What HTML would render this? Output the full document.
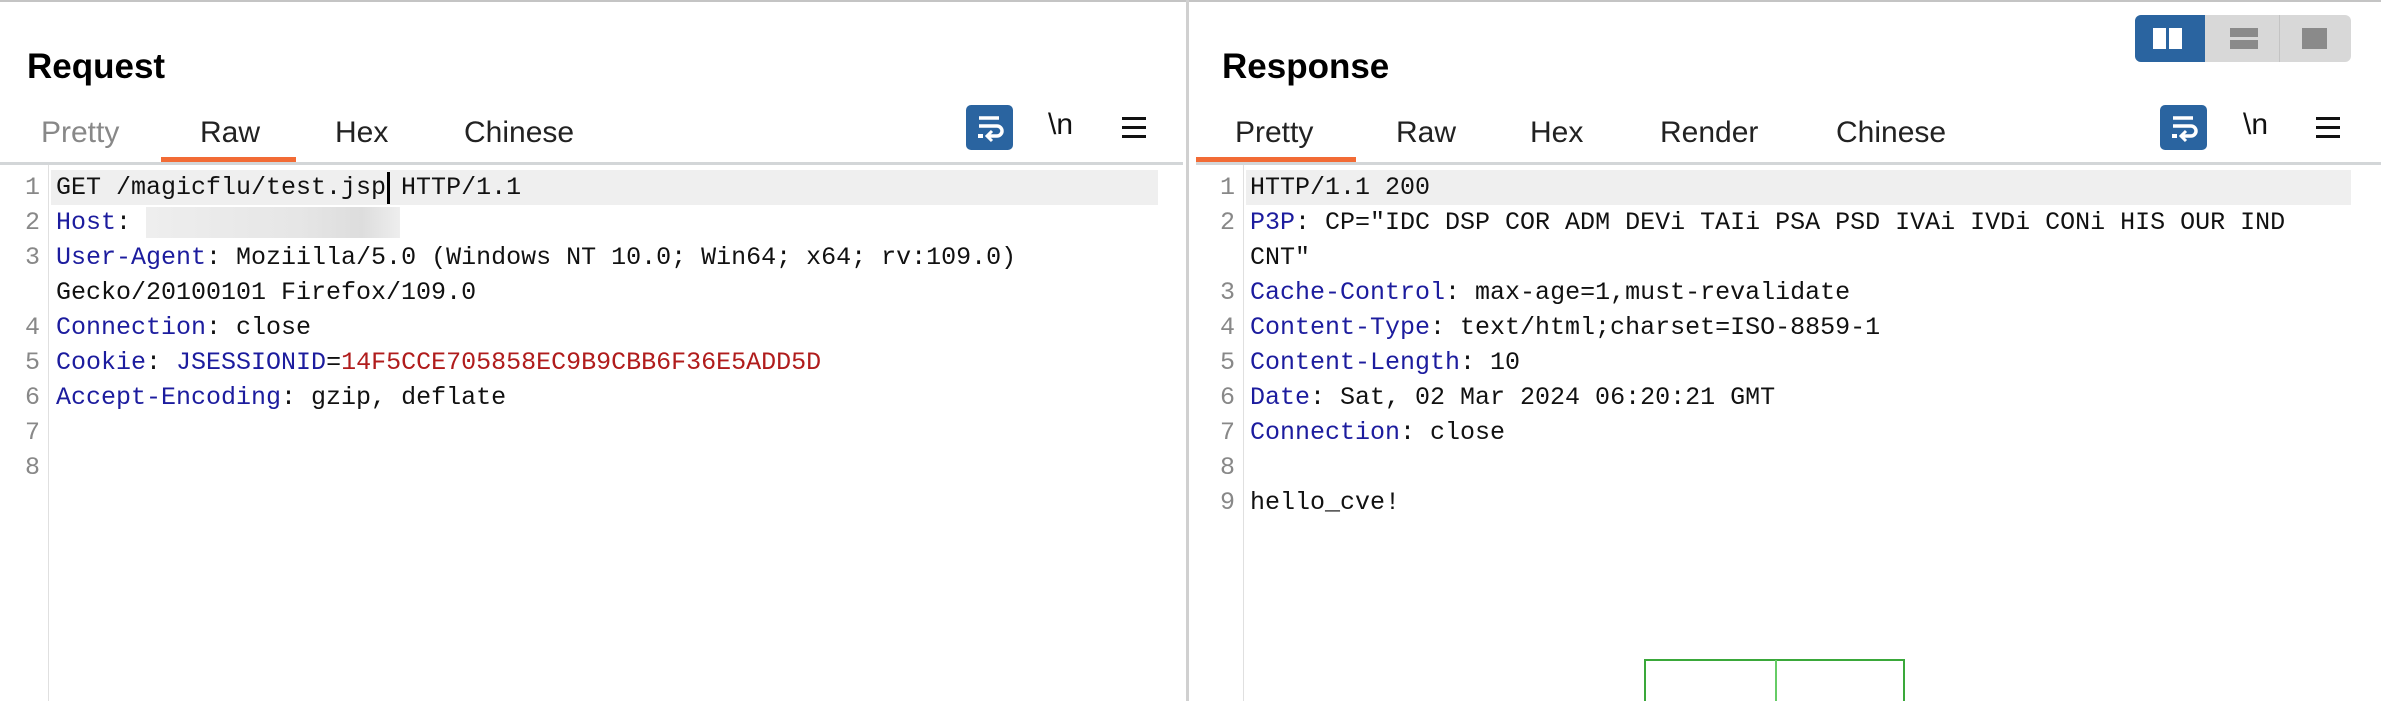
<!DOCTYPE html>
<html><head><meta charset="utf-8"><style>
*{margin:0;padding:0;box-sizing:border-box}
html,body{width:2381px;height:701px;overflow:hidden}
body{background:#fff;font-family:"Liberation Sans",sans-serif}
#w{position:relative;width:2381px;height:701px;overflow:hidden}
.a{position:absolute}
.title{font-size:35px;font-weight:bold;color:#000;top:47px}
.tab{font-size:30px;color:#222;top:115px;line-height:36px}
.code{font-family:"Liberation Mono",monospace;font-size:25px;line-height:35px;white-space:pre;color:#111}
.ln{color:#888;font-family:"Liberation Mono",monospace;font-size:25px;line-height:35px;white-space:pre;text-align:right}
.k{color:#1c1c9e}.r{color:#b01c1c}
.wrap{background:#2a64a0;border-radius:5px;width:47px;height:45px}
.nl{font-size:30px;color:#111;font-family:"Liberation Sans",sans-serif;top:108px}
.hb{width:24px;height:3px;background:#111}
</style></head><body><div id="w">
<div class="a" style="left:0;top:0;width:2381px;height:2px;background:#c4c4c4"></div>
<div class="a" style="left:1186px;top:0;width:3px;height:701px;background:#d0d0d0"></div>

<div class="a title" style="left:27px">Request</div>
<div class="a tab" style="left:41px;color:#888">Pretty</div>
<div class="a tab" style="left:200px">Raw</div>
<div class="a tab" style="left:335px">Hex</div>
<div class="a tab" style="left:464px">Chinese</div>
<div class="a" style="left:161px;top:157px;width:135px;height:5px;background:#f26b35"></div>
<div class="a" style="left:0;top:162px;width:1183px;height:3px;background:#d3d6d8"></div>
<div class="a wrap" style="left:966px;top:105px"><svg width="47" height="45" viewBox="0 0 47 45"><path d="M13 13h20M13 21h18a5 5 0 0 1 0 10h-8" stroke="#fff" stroke-width="3.5" fill="none"/><path d="M26 26l-5 5 5 5" stroke="#fff" stroke-width="3" fill="none"/><rect x="12" y="29" width="5" height="4" fill="#fff"/></svg></div>
<div class="a nl" style="left:1048px">\n</div>
<div class="a" style="left:1122px;top:117px"><div class="hb"></div><div class="hb" style="margin-top:6px"></div><div class="hb" style="margin-top:6px"></div></div>
<div class="a" style="left:48px;top:165px;width:1px;height:536px;background:#e0e0e0"></div>
<div class="a" style="left:51px;top:170px;width:1107px;height:35px;background:#efefef"></div>
<div class="a" style="left:146px;top:207px;width:254px;height:31px;background:linear-gradient(90deg,#eee,#e6e6e6 60%,#ddd 85%,#eee)"></div>
<div class="a" style="left:387px;top:172px;width:3px;height:32px;background:#000"></div>
<div class="a ln" style="left:10px;top:170px;width:30px">1
2
3

4
5
6
7
8</div>
<div class="a code" style="left:56px;top:170px">GET /magicflu/test.jsp HTTP/1.1
<span class="k">Host</span>:
<span class="k">User-Agent</span>: Moziilla/5.0 (Windows NT 10.0; Win64; x64; rv:109.0)
Gecko/20100101 Firefox/109.0
<span class="k">Connection</span>: close
<span class="k">Cookie</span>: <span class="k">JSESSIONID</span>=<span class="r">14F5CCE705858EC9B9CBB6F36E5ADD5D</span>
<span class="k">Accept-Encoding</span>: gzip, deflate</div>

<div class="a" style="left:2135px;top:15px;width:216px;height:47px;background:#d8d8d8;border-radius:6px"></div>
<div class="a" style="left:2135px;top:15px;width:70px;height:47px;background:#2a64a0;border-radius:6px 0 0 6px"></div>
<div class="a" style="left:2153px;top:28px;width:13px;height:21px;background:#fff"></div>
<div class="a" style="left:2169px;top:28px;width:13px;height:21px;background:#fff"></div>
<div class="a" style="left:2279px;top:15px;width:1px;height:47px;background:#c4c4c4"></div>
<div class="a" style="left:2230px;top:28px;width:28px;height:9px;background:#8a8a8a"></div>
<div class="a" style="left:2230px;top:40px;width:28px;height:9px;background:#8a8a8a"></div>
<div class="a" style="left:2302px;top:28px;width:25px;height:21px;background:#8a8a8a"></div>

<div class="a title" style="left:1222px">Response</div>
<div class="a tab" style="left:1235px">Pretty</div>
<div class="a tab" style="left:1396px">Raw</div>
<div class="a tab" style="left:1530px">Hex</div>
<div class="a tab" style="left:1660px">Render</div>
<div class="a tab" style="left:1836px">Chinese</div>
<div class="a" style="left:1196px;top:157px;width:160px;height:5px;background:#f26b35"></div>
<div class="a" style="left:1196px;top:162px;width:1185px;height:3px;background:#d3d6d8"></div>
<div class="a wrap" style="left:2160px;top:105px"><svg width="47" height="45" viewBox="0 0 47 45"><path d="M13 13h20M13 21h18a5 5 0 0 1 0 10h-8" stroke="#fff" stroke-width="3.5" fill="none"/><path d="M26 26l-5 5 5 5" stroke="#fff" stroke-width="3" fill="none"/><rect x="12" y="29" width="5" height="4" fill="#fff"/></svg></div>
<div class="a nl" style="left:2243px">\n</div>
<div class="a" style="left:2316px;top:117px"><div class="hb"></div><div class="hb" style="margin-top:6px"></div><div class="hb" style="margin-top:6px"></div></div>
<div class="a" style="left:1243px;top:165px;width:1px;height:536px;background:#e0e0e0"></div>
<div class="a" style="left:1246px;top:170px;width:1105px;height:35px;background:#efefef"></div>
<div class="a ln" style="left:1205px;top:170px;width:30px">1
2

3
4
5
6
7
8
9</div>
<div class="a code" style="left:1250px;top:170px">HTTP/1.1 200
<span class="k">P3P</span>: CP="IDC DSP COR ADM DEVi TAIi PSA PSD IVAi IVDi CONi HIS OUR IND
CNT"
<span class="k">Cache-Control</span>: max-age=1,must-revalidate
<span class="k">Content-Type</span>: text/html;charset=ISO-8859-1
<span class="k">Content-Length</span>: 10
<span class="k">Date</span>: Sat, 02 Mar 2024 06:20:21 GMT
<span class="k">Connection</span>: close

hello_cve!</div>

<div class="a" style="left:1644px;top:659px;width:2px;height:42px;background:#3aa83a"></div>
<div class="a" style="left:1644px;top:659px;width:261px;height:2px;background:#3aa83a"></div>
<div class="a" style="left:1903px;top:659px;width:2px;height:42px;background:#3aa83a"></div>
<div class="a" style="left:1775px;top:660px;width:2px;height:41px;background:#6c6"></div>
</div></body></html>
